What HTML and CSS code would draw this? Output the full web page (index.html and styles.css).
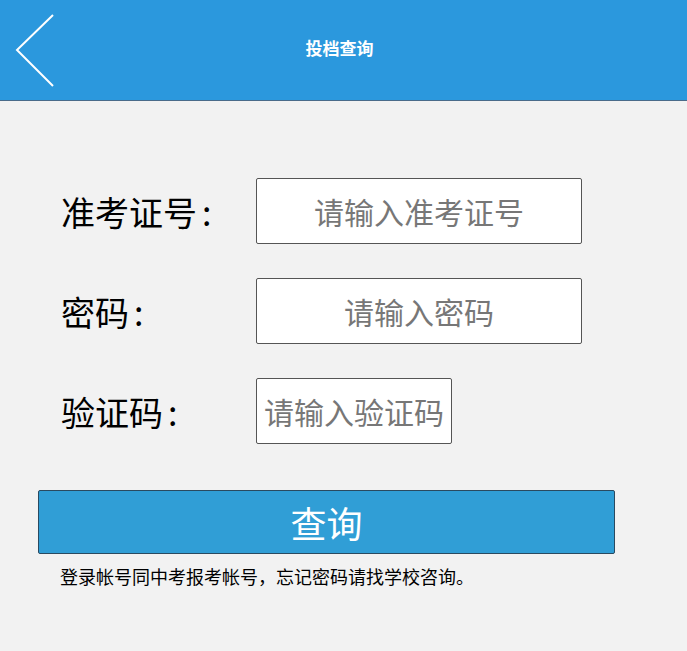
FILE: index.html
```html
<!DOCTYPE html>
<html>
  <head>
    <meta charset="utf-8">
    <title>投档查询</title>
    <link rel="stylesheet" href="styles.css">
  </head>
  <body>
    <div class="header">
      <a class="back" href="#">
        <svg width="44" height="76" viewBox="0 0 44 76">
          <polyline points="40,2 4,37 40,73" fill="none" stroke="#fff" stroke-width="2"/>
        </svg>
      </a>
      <h1>投档查询</h1>
    </div>
    <form class="query-form">
      <div class="row">
        <label for="exam-no">准考证号<span class="colon">:</span></label>
        <input type="text" id="exam-no" placeholder="请输入准考证号">
      </div>
      <div class="row">
        <label for="password">密码<span class="colon">:</span></label>
        <input type="password" id="password" placeholder="请输入密码">
      </div>
      <div class="row">
        <label for="captcha">验证码<span class="colon">:</span></label>
        <input type="text" id="captcha" class="short" placeholder="请输入验证码">
      </div>
      <button type="button" class="submit">查询</button>
      <p class="note">登录帐号同中考报考帐号，忘记密码请找学校咨询。</p>
    </form>
  </body>
</html>
```
FILE: styles.css
```css
body {
  margin: 0;
  background-color: #f2f2f2;
  font-family: "Noto Sans CJK SC", "Noto Sans", sans-serif;
}
.header {
  position: relative;
  height: 100px;
  background-color: #2b98dd;
  border-bottom: 1px solid #4a6b8a;
  display: flex;
  align-items: center;
  justify-content: center;
}
.header h1 {
  margin: 0 8px 6px 0;
  font-size: 17px;
  font-weight: bold;
  color: #fff;
}
.back {
  position: absolute;
  left: 13px;
  top: 13px;
  display: block;
  line-height: 0;
}
.query-form {
  padding: 77px 0 0 0;
}
.row {
  display: flex;
  align-items: center;
  margin-bottom: 34px;
  padding-left: 61px;
}
.row label {
  width: 195px;
  font-size: 34px;
  color: #000;
}
.row label .colon {
  margin-left: 5px;
}
.row input {
  box-sizing: border-box;
  width: 326px;
  height: 66px;
  border: 1px solid #555;
  border-radius: 2px;
  background: #fff;
  font-family: inherit;
  font-size: 30px;
  text-align: center;
  padding: 0 6px;
  color: #333;
}
.row input::placeholder {
  color: #777;
}
.row input.short {
  width: 196px;
}
.row:nth-child(3) {
  margin-bottom: 46px;
}
.submit {
  display: block;
  box-sizing: border-box;
  margin-left: 38px;
  width: 577px;
  height: 64px;
  background-color: #309ed6;
  border: 1px solid #2a4a60;
  border-radius: 2px;
  color: #fff;
  font-family: inherit;
  font-size: 36px;
  cursor: pointer;
}
.note {
  margin: 9px 0 0 60px;
  font-size: 18px;
  color: #000;
}
```
